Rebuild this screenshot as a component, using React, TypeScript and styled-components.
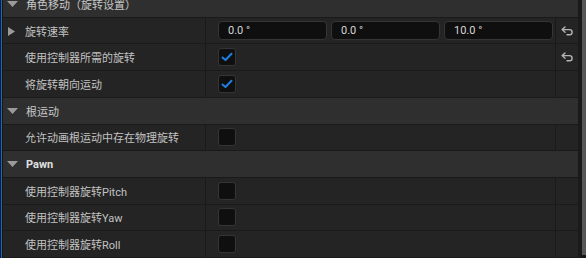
import React from "react";
import styled, { createGlobalStyle } from "styled-components";

const Global = createGlobalStyle`
  html, body { margin: 0; padding: 0; background: #151515; overflow: hidden; }
  * { box-sizing: border-box; }
`;

const Frame = styled.div`
  display: flex;
  width: 586px;
  height: 258px;
  background: #161616;
  font-family: Roboto, "Noto Sans CJK SC", sans-serif;
  overflow: hidden;
`;

const Accent = styled.div`
  width: 1px;
  margin-left: 1px;
  margin-right: 1px;
  background: #0a6fd8;
  flex: none;
`;

const Content = styled.div`
  flex: none;
  width: 575px;
  margin-top: -9px;
  display: flex;
  flex-direction: column;
`;

const Gutter = styled.div`
  flex: none;
  width: 4px;
  background: #1a1a1a;
`;

const ScrollTrack = styled.div`
  flex: none;
  width: 4px;
  display: flex;
  flex-direction: column;
`;

const ScrollThumb = styled.div`
  height: 255px;
  background: #575757;
`;

const Row = styled.div`
  display: grid;
  grid-template-columns: 203px 350px 22px;
  height: 27px;
  background: #242424;
  border-bottom: 1px solid #1a1a1a;
`;

const SectionRow = styled.div`
  display: flex;
  align-items: center;
  height: 27px;
  background: #2f2f2f;
  border-bottom: 1px solid #1a1a1a;
  padding-left: 4px;
  gap: 8px;
`;

const SectionTitle = styled.span<{ $bold?: boolean }>`
  font-size: 11px;
  color: ${(p) => (p.$bold ? "#e0e0e0" : "#c8c8c8")};
  font-weight: ${(p) => (p.$bold ? 700 : 400)};
  font-feature-settings: "fwid" 1;
  text-spacing-trim: space-all;
`;

const Paren = styled.span`
  display: inline-block;
  width: 11px;
  text-align: center;
`;

const NameCell = styled.div`
  display: flex;
  align-items: center;
  border-right: 1px solid #1a1a1a;
  position: relative;
  padding-left: 22px;
  font-size: 11px;
  color: #c2c2c2;
  white-space: nowrap;
`;

const ValueCell = styled.div`
  display: flex;
  align-items: center;
  gap: 4px;
  padding-left: 12px;
  border-right: 1px solid #1a1a1a;
`;

const ResetCell = styled.div`
  display: flex;
  align-items: center;
  justify-content: center;
  padding-left: 1px;
`;

const NumInput = styled.div`
  width: 109px;
  height: 19px;
  background: #0f0f0f;
  border: 1px solid #353535;
  border-radius: 4px;
  display: flex;
  align-items: center;
  padding-left: 9px;
  font-size: 11px;
  color: #d6d6d6;
`;

const Check = styled.div`
  width: 18px;
  height: 18px;
  background: #0f0f0f;
  border: 1px solid #353535;
  border-radius: 3px;
  display: flex;
  align-items: center;
  justify-content: center;
`;

const ExpandArrow = styled.svg`
  position: absolute;
  left: 5px;
  top: 9px;
`;

const DownTri = () => (
  <svg width="11" height="6" viewBox="0 0 11 6">
    <polygon points="0,0 11,0 5.5,6" fill="#9a9a9a" />
  </svg>
);

const Tick = () => (
  <svg width="12" height="10" viewBox="0 0 12 10">
    <path d="M1.5 5.5 L4.5 8 L10.5 1.8" stroke="#1f7fe6" strokeWidth="2" fill="none" strokeLinecap="round" strokeLinejoin="round" />
  </svg>
);

const ResetIcon = () => (
  <svg width="13" height="10" viewBox="0 0 13 10">
    <path d="M4 1 L1.2 3.6 L4 6.2" stroke="#b4b4b4" strokeWidth="1.4" fill="none" strokeLinejoin="round" strokeLinecap="round" />
    <path d="M1.5 3.6 H8.5 a2.6 2.6 0 0 1 0 5.2 H6" stroke="#b4b4b4" strokeWidth="1.4" fill="none" strokeLinecap="round" />
  </svg>
);

type PropRow = {
  name: string;
  kind: "vec" | "check";
  checked?: boolean;
  reset?: boolean;
  expand?: boolean;
  values?: string[];
};

const Prop = ({ r }: { r: PropRow }) => (
  <Row>
    <NameCell>
      {r.expand && (
        <ExpandArrow width="7" height="9" viewBox="0 0 7 9">
          <polygon points="0,0 7,4.5 0,9" fill="#9a9a9a" />
        </ExpandArrow>
      )}
      {r.name}
    </NameCell>
    <ValueCell>
      {r.kind === "vec"
        ? r.values!.map((v, i) => <NumInput key={i}>{v}</NumInput>)
        : <Check>{r.checked && <Tick />}</Check>}
    </ValueCell>
    <ResetCell>{r.reset && <ResetIcon />}</ResetCell>
  </Row>
);

const Section = ({ children, bold }: { children: React.ReactNode; bold?: boolean }) => (
  <SectionRow>
    <DownTri />
    <SectionTitle $bold={bold}>{children}</SectionTitle>
  </SectionRow>
);

export default function App() {
  return (
    <>
      <Global />
      <Frame>
        <Accent />
        <Content>
          <Section>
            角色移动<Paren>（</Paren>旋转设置<Paren>）</Paren>
          </Section>
          <Prop r={{ name: "旋转速率", kind: "vec", expand: true, reset: true, values: ["0.0 °", "0.0 °", "10.0 °"] }} />
          <Prop r={{ name: "使用控制器所需的旋转", kind: "check", checked: true, reset: true }} />
          <Prop r={{ name: "将旋转朝向运动", kind: "check", checked: true }} />
          <Section>根运动</Section>
          <Prop r={{ name: "允许动画根运动中存在物理旋转", kind: "check" }} />
          <Section bold>Pawn</Section>
          <Prop r={{ name: "使用控制器旋转Pitch", kind: "check" }} />
          <Prop r={{ name: "使用控制器旋转Yaw", kind: "check" }} />
          <Prop r={{ name: "使用控制器旋转Roll", kind: "check" }} />
        </Content>
        <Gutter />
        <ScrollTrack>
          <ScrollThumb />
        </ScrollTrack>
      </Frame>
    </>
  );
}
